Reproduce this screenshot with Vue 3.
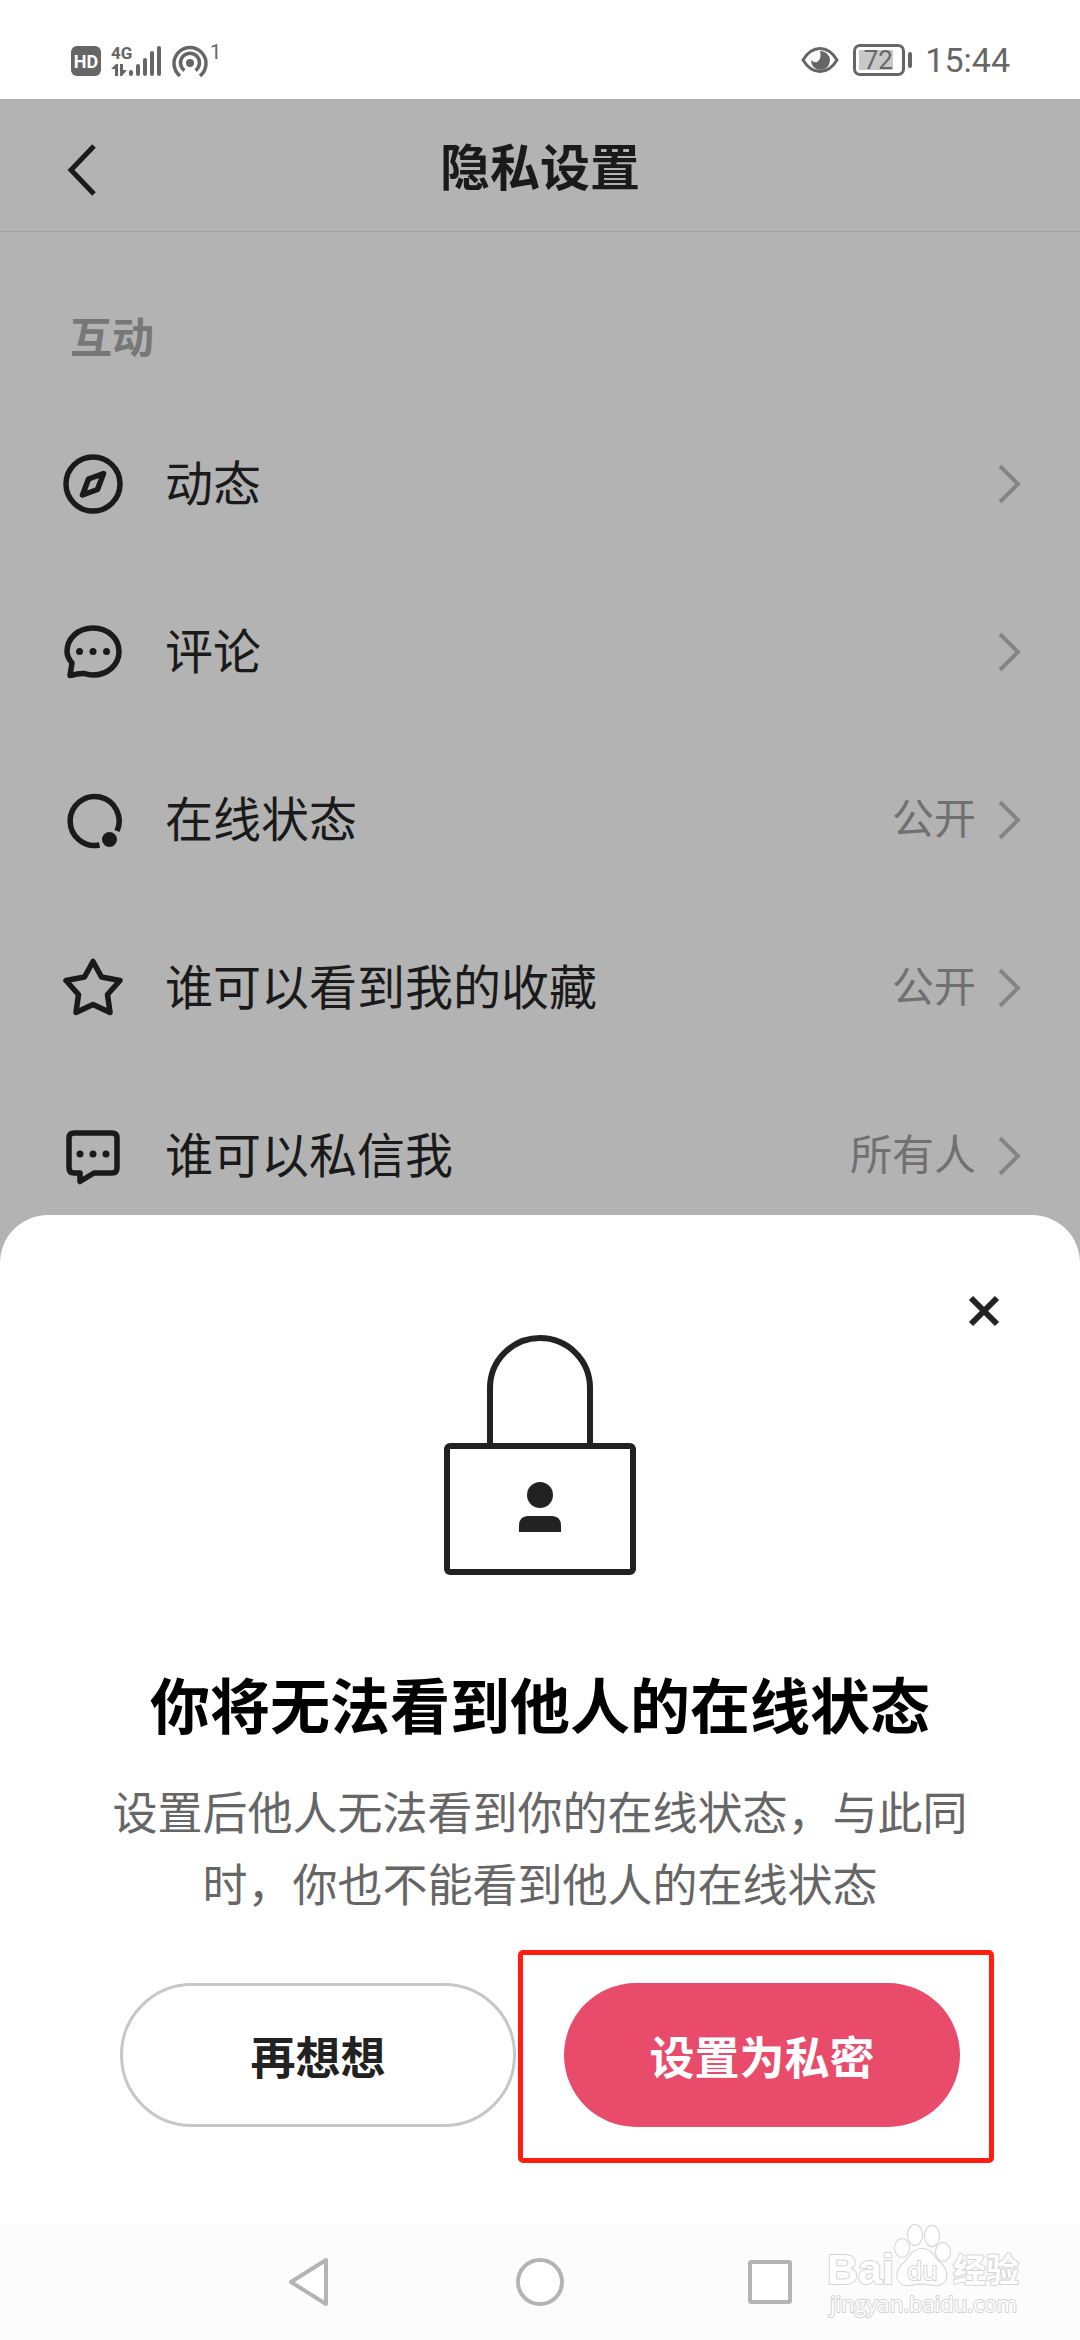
<script setup>
import { ref } from 'vue'

const sheetOpen = ref(true)

const rows = [
  { icon: 'compass', label: '动态', value: '' },
  { icon: 'comment', label: '评论', value: '' },
  { icon: 'online', label: '在线状态', value: '公开' },
  { icon: 'star', label: '谁可以看到我的收藏', value: '公开' },
  { icon: 'message', label: '谁可以私信我', value: '所有人' },
]

function closeSheet() {
  sheetOpen.value = false
}
</script>

<template>
  <div class="screen">
    <div class="status-bar">
      <svg width="170" height="38" viewBox="0 -2 170 38" fill="#666">
        <rect x="1" y="3" width="30" height="30" rx="6" />
        <text x="16" y="25" text-anchor="middle" font-size="18" font-weight="700" fill="#fff">HD</text>
        <text x="41" y="16" font-size="17" font-weight="700">4G</text>
        <path d="M41 26l5-5h2v12h-3v-7zM50 21h3v6h4l-5 6h-2z" />
        <path
          d="M61 29v2M68 23v8M75 17v14M82 10v21M89 5v26"
          stroke="#666"
          stroke-width="4"
          stroke-linecap="round"
        />
        <g fill="none" stroke="#666" stroke-width="3.500">
          <path d="M110 33A16 16 0 1 1 130 33" />
          <path d="M114.500 27.500A9.500 9.500 0 1 1 125.500 27.500" />
        </g>
        <circle cx="120" cy="20" r="4" />
        <text x="140" y="16" font-size="20">1</text>
      </svg>
      <div class="status-right">
        <svg width="38" height="28" viewBox="0 0 38 28">
          <path
            d="M2 14Q9 2.500 19 2.500T36 14Q29 25.500 19 25.500T2 14Z"
            fill="none"
            stroke="#666"
            stroke-width="3"
          />
          <path d="M19 5a9.500 9.500 0 1 1-9 9q3 3 6 2 5-3 3-11z" fill="#666" />
        </svg>
        <div class="battery"><span>72</span></div>
        <span class="time">15:44</span>
      </div>
    </div>

    <main>
      <header class="header">
        <button class="back" aria-label="返回">
          <svg width="32" height="54" viewBox="0 0 32 54" fill="none" stroke="#1a1a1a" stroke-width="5">
            <path d="M28 3L5 27l23 24" />
          </svg>
        </button>
        <h1>隐私设置</h1>
      </header>

      <h2 class="section">互动</h2>
      <ul class="rows">
        <li v-for="row in rows" :key="row.label">
          <button class="row">
            <svg
              class="row-icon"
              viewBox="0 0 60 60"
              fill="none"
              stroke="#1a1a1a"
              stroke-width="5.500"
              stroke-linecap="round"
              stroke-linejoin="round"
            >
              <template v-if="row.icon === 'compass'">
                <circle cx="30" cy="30" r="27" />
                <path d="M40.500 19.500L25.500 25l-6 16 15-5.500z" />
              </template>
              <template v-else-if="row.icon === 'comment'">
                <path
                  d="M30 6C45 6 56 16.500 56 29.500S45 53 30 53c-4 0-6-1-9-1.500-4-.5-8 .5-14 2l2-12.500C6 37.500 4 34 4 29.500 4 16.500 15 6 30 6z"
                />
                <g fill="#1a1a1a" stroke="none">
                  <circle cx="16.500" cy="29.500" r="3.500" />
                  <circle cx="30" cy="29.500" r="3.500" />
                  <circle cx="43.500" cy="29.500" r="3.500" />
                </g>
              </template>
              <template v-else-if="row.icon === 'online'">
                <path d="M54 41A24.500 24.500 0 1 0 36.500 55" stroke-linecap="butt" />
                <circle cx="46.500" cy="49.500" r="7.500" fill="#1a1a1a" stroke="none" />
              </template>
              <path
                v-else-if="row.icon === 'star'"
                d="M30 3.500l8.500 15.500L57 22.500 44.500 36.500 47 54.500 30 46.500 13 54.500 15.500 36.500 3 22.500 21.500 19z"
              />
              <template v-else>
                <path d="M11 7h38q5 0 5 5v30q0 5-5 5H31l-14 8.500V47h-6q-5 0-5-5V12q0-5 5-5z" />
                <g fill="#1a1a1a" stroke="none">
                  <circle cx="17" cy="28" r="3.500" />
                  <circle cx="30" cy="28" r="3.500" />
                  <circle cx="43" cy="28" r="3.500" />
                </g>
              </template>
            </svg>
            <span class="row-label">{{ row.label }}</span>
            <span class="row-value">{{ row.value }}</span>
            <svg width="24" height="40" viewBox="0 0 24 40" fill="none" stroke="#858585" stroke-width="4">
              <path d="M2 2l18 18L2 38" />
            </svg>
          </button>
        </li>
      </ul>
    </main>

    <section v-if="sheetOpen" class="sheet" role="dialog" aria-labelledby="sheet-title">
      <button class="close" aria-label="关闭" @click="closeSheet">
        <svg width="32" height="32" viewBox="0 0 32 32" stroke="#222" stroke-width="6">
          <path d="M3 3l26 26M29 3L3 29" />
        </svg>
      </button>
      <svg width="192" height="240" viewBox="0 0 192 240" fill="none" stroke="#222" stroke-width="6">
        <path d="M46 110V53a50 50 0 0 1 100 0v57" />
        <rect x="3" y="111" width="186" height="126" rx="3" />
        <g fill="#222" stroke="none">
          <circle cx="96" cy="160" r="13" />
          <path d="M75 197v-6q0-10 9-10h24q9 0 9 10v6z" />
        </g>
      </svg>
      <h2 id="sheet-title">你将无法看到他人的在线状态</h2>
      <p>设置后他人无法看到你的在线状态，与此同时，你也不能看到他人的在线状态</p>
      <div class="actions">
        <button class="action cancel" @click="closeSheet">再想想</button>
        <div class="confirm-wrap">
          <button class="action confirm">设置为私密</button>
        </div>
      </div>
    </section>

    <nav class="nav-bar">
      <button aria-label="返回">
        <svg width="48" height="50" viewBox="0 0 48 50"><path d="M5 25L40 3v44z" /></svg>
      </button>
      <button aria-label="主页">
        <svg width="48" height="50" viewBox="0 0 48 50"><circle cx="24" cy="25" r="22" /></svg>
      </button>
      <button aria-label="最近任务">
        <svg width="48" height="50" viewBox="0 0 48 50"><rect x="4" y="5" width="40" height="40" rx="1" /></svg>
      </button>
      <svg class="watermark" width="204" height="100" viewBox="0 0 204 100">
        <text class="brand" x="3" y="60" font-size="43">Bai</text>
        <ellipse cx="78" cy="24" rx="7" ry="9" />
        <ellipse cx="91" cy="11" rx="7" ry="10" />
        <ellipse cx="108" cy="12" rx="7" ry="10" />
        <ellipse cx="119" cy="28" rx="7" ry="9" />
        <path d="M98 25c-10 0-12 9-18 14-11 9-8 24 6 22 9-2 15-2 24 0 13 2 17-13 6-22-6-5-8-14-18-14z" />
        <text x="83" y="56" font-size="25">du</text>
        <text x="129" y="58" font-size="33" font-weight="700">经验</text>
        <text x="6" y="88" font-size="22">jingyan.baidu.com</text>
      </svg>
    </nav>
  </div>
</template>

<style>
body {
  margin: 0;
  background: #fff;
}
</style>

<style scoped>
.screen {
  display: flex;
  flex-direction: column;
  min-height: 100vh;
  background: #b3b3b3;
  color: #1a1a1a;
  font-family: 'Noto Sans CJK SC', sans-serif;
}

button {
  padding: 0;
  border: none;
  background: none;
  color: inherit;
  font-family: inherit;
  cursor: pointer;
}

svg {
  display: block;
  flex-shrink: 0;
}

h1,
h2,
p,
ul {
  margin: 0;
  padding: 0;
}

.status-bar {
  display: flex;
  justify-content: space-between;
  height: 99px;
  padding: 41px 70px 0;
  box-sizing: border-box;
  background: #fff;
  color: #666;
  font-family: Roboto, sans-serif;
}

.status-right {
  display: flex;
  align-items: center;
  gap: 14px;
  height: 38px;
}

.battery {
  position: relative;
  width: 52px;
  height: 32px;
  margin-right: 6px;
  padding: 3px;
  box-sizing: border-box;
  border: 3px solid #666;
  border-radius: 7px;
  font-size: 26px;
  line-height: 20px;
  text-align: center;
}

.battery span {
  display: block;
  width: 34px;
  padding-left: 4px;
  box-sizing: border-box;
  background: #c8c8c8;
}

.battery::after {
  content: '';
  position: absolute;
  top: 5px;
  right: -10px;
  width: 4px;
  height: 16px;
  border-radius: 2px;
  background: #666;
}

.time {
  font-size: 34px;
  line-height: 38px;
}

.header {
  display: grid;
  grid-template-columns: 32px 1fr 32px;
  align-items: center;
  height: 133px;
  padding: 10px 66px 0;
  box-sizing: border-box;
  border-bottom: 1px solid #a6a6a6;
}

h1 {
  padding-bottom: 12px;
  font-size: 50px;
  line-height: 72px;
  text-align: center;
}

.section {
  padding: 73px 70px 35px;
  color: #777;
  font-size: 42px;
  line-height: 60px;
}

.rows {
  list-style: none;
}

.row {
  display: flex;
  align-items: center;
  width: 100%;
  height: 168px;
  padding: 0 58px 0 63px;
  text-align: left;
}

.row-icon {
  width: 60px;
  height: 60px;
  margin-right: 42px;
}

.row-label {
  flex: 1;
  padding-bottom: 8px;
  font-size: 48px;
  line-height: 72px;
}

.row-value {
  margin-right: 22px;
  padding-bottom: 8px;
  color: #707070;
  font-size: 42px;
  line-height: 60px;
}

/* the sheet slides over the end of the list */
.sheet {
  position: relative;
  display: flex;
  flex-direction: column;
  align-items: center;
  flex: 1;
  margin-top: -25px;
  padding: 120px 108px 96px;
  box-sizing: border-box;
  border-radius: 48px 48px 0 0;
  background: #fff;
  text-align: center;
}

.close {
  position: absolute;
  top: 80px;
  right: 80px;
}

.sheet h2 {
  margin-top: 86px;
  color: #000;
  font-size: 60px;
  line-height: 84px;
}

.sheet p {
  margin-top: 30px;
  color: #666;
  font-size: 45px;
  line-height: 72px;
}

.actions {
  display: grid;
  grid-template-columns: 1fr 1fr;
  gap: 48px;
  width: 840px;
  max-width: 100%;
  margin-top: 64px;
}

.action {
  width: 100%;
  height: 144px;
  box-sizing: border-box;
  border-radius: 72px;
  font-size: 45px;
  font-weight: 700;
}

.cancel {
  border: 3px solid #c7c7c7;
  color: #222;
}

.confirm-wrap {
  position: relative;
}

.confirm {
  background: #e94b6a;
  color: #fff;
}

.confirm-wrap::after {
  content: '';
  position: absolute;
  inset: -33px -34px -36px -46px;
  border: 5px solid #ff1e10;
  border-radius: 5px;
  pointer-events: none;
}

.nav-bar {
  position: relative;
  display: flex;
  align-items: center;
  justify-content: center;
  gap: 182px;
  height: 116px;
  background: #fcfcfc;
}

.nav-bar button svg {
  fill: #fff;
  stroke: #b4b4b4;
  stroke-width: 4;
  stroke-linejoin: round;
}

.watermark {
  position: absolute;
  right: 52px;
  bottom: 16px;
  fill: #fff;
  stroke: #d4d4d4;
  stroke-width: 2;
  stroke-linejoin: round;
  paint-order: stroke;
  font-family: 'Open Sans', 'Noto Sans CJK SC', sans-serif;
}

.brand {
  font-family: 'Liberation Sans', sans-serif;
  font-weight: 700;
}
</style>
